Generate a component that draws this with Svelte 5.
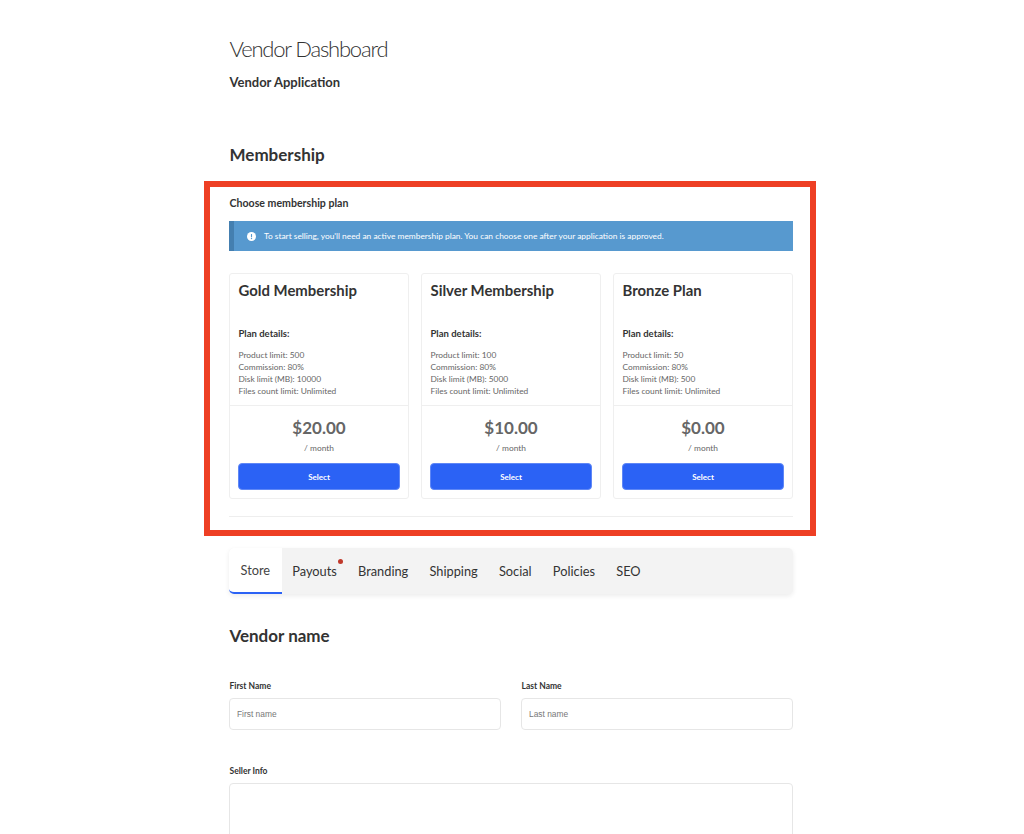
<script>
  const plans = [
    { name: 'Gold Membership', products: 500, disk: 10000, price: '$20.00' },
    { name: 'Silver Membership', products: 100, disk: 5000, price: '$10.00' },
    { name: 'Bronze Plan', products: 50, disk: 500, price: '$0.00' }
  ];
  const tabs = ['Store', 'Payouts', 'Branding', 'Shipping', 'Social', 'Policies', 'SEO'];
</script>

<main class="page">
  <h1>Vendor Dashboard</h1>
  <h2 class="sub">Vendor Application</h2>
  <h3 class="section">Membership</h3>

  <section class="highlight">
    <h4>Choose membership plan</h4>
    <div class="alert">
      <svg viewBox="0 0 16 16" width="9" height="9" aria-hidden="true">
        <circle cx="8" cy="8" r="8" fill="#fff" />
        <rect x="7" y="3.4" width="2" height="5.8" rx="0.6" fill="#5799cf" />
        <circle cx="8" cy="11.6" r="1.2" fill="#5799cf" />
      </svg>
      <span>To start selling, you'll need an active membership plan. You can choose one after your application is approved.</span>
    </div>

    <div class="plans">
      {#each plans as plan}
        <article class="card">
          <div class="card-top">
            <div class="plan-name">{plan.name}</div>
            <div class="plan-label">Plan details:</div>
            <ul>
              <li>Product limit: {plan.products}</li>
              <li>Commission: 80%</li>
              <li>Disk limit (MB): {plan.disk}</li>
              <li>Files count limit: Unlimited</li>
            </ul>
          </div>
          <div class="card-bottom">
            <div class="price">{plan.price}</div>
            <div class="period">/ month</div>
            <button type="button">Select</button>
          </div>
        </article>
      {/each}
    </div>
    <hr />
  </section>

  <nav class="tabs">
    {#each tabs as tab, i}
      <div class="tab" class:active={i === 0}>
        {tab}
        {#if tab === 'Payouts'}<span class="dot"></span>{/if}
      </div>
    {/each}
  </nav>

  <h3 class="vendor">Vendor name</h3>

  <div class="names">
    <div class="field">
      <label for="fn">First Name</label>
      <input id="fn" placeholder="First name" />
    </div>
    <div class="field">
      <label for="ln">Last Name</label>
      <input id="ln" placeholder="Last name" />
    </div>
  </div>

  <div class="field info">
    <label for="si">Seller Info</label>
    <textarea id="si"></textarea>
  </div>
</main>

<style>
  :global(body) {
    margin: 0;
    background: #fff;
    font-family: Lato, "Open Sans", sans-serif;
    color: #333;
    overflow: hidden;
  }
  .page {
    box-sizing: border-box;
    width: 564px;
    height: 834px;
    margin-left: 229px;
    -webkit-font-smoothing: antialiased;
  }
  h1 {
    margin: 0;
    padding: 35px 0 0 0.5px;
    font-size: 22px;
    line-height: 28px;
    font-weight: 300;
    letter-spacing: -1.2px;
    color: #333;
  }
  .sub {
    margin: 10px 0 0;
    padding-left: 0.5px;
    font-size: 13px;
    line-height: 18px;
    font-weight: 700;
  }
  .section {
    margin: 52px 0 0;
    padding-left: 0.5px;
    font-size: 17px;
    line-height: 24px;
    font-weight: 700;
  }
  .highlight {
    box-sizing: border-box;
    margin: 14px -23px 0 -25px;
    height: 355px;
    border: 6px solid #ee3f24;
    padding: 0 17px 0 19px;
  }
  h4 {
    margin: 0;
    padding: 9px 0 0 0.5px;
    font-size: 10.6px;
    line-height: 14px;
    font-weight: 700;
  }
  .alert {
    box-sizing: border-box;
    margin-top: 11px;
    height: 30px;
    background: #5799cf;
    border-left: 5px solid #447fb0;
    padding-left: 13px;
    display: flex;
    align-items: center;
    gap: 8px;
    color: #fff;
    font-size: 8.4px;
  }
  .plans {
    margin-top: 22px;
    display: grid;
    grid-template-columns: repeat(3, 1fr);
    gap: 12px;
  }
  .card {
    box-sizing: border-box;
    height: 226px;
    border: 1px solid #efefef;
    border-radius: 3px;
    display: flex;
    flex-direction: column;
  }
  .card-top {
    box-sizing: border-box;
    height: 132px;
    padding: 6px 8px 0 8.5px;
    border-bottom: 1px solid #efefef;
  }
  .plan-name {
    font-size: 14.9px;
    line-height: 20px;
    font-weight: 700;
  }
  .plan-label {
    margin-top: 27.5px;
    font-size: 9.5px;
    line-height: 12px;
    font-weight: 700;
  }
  ul {
    list-style: none;
    margin: 10.5px 0 0;
    padding: 0;
    font-size: 8.4px;
    line-height: 11.9px;
    color: #666;
  }
  .card-bottom {
    padding: 0 8px;
    text-align: center;
  }
  .price {
    margin-top: 10px;
    font-size: 17px;
    line-height: 24px;
    font-weight: 700;
    color: #666;
  }
  .period {
    margin-top: 2px;
    font-size: 8.4px;
    line-height: 12px;
    color: #666;
  }
  button {
    display: block;
    width: 100%;
    height: 27px;
    margin-top: 9px;
    border: 1px solid #5f87f6;
    border-radius: 4px;
    background: #2b62f5;
    color: #fff;
    font-family: inherit;
    font-size: 8px;
    font-weight: 700;
  }
  hr {
    margin: 17px 0 0;
    border: 0;
    border-top: 1px solid #eee;
  }
  .tabs {
    margin-top: 12px;
    height: 46px;
    background: #f3f3f3;
    border-radius: 5px;
    box-shadow: 0 2px 5px rgba(0, 0, 0, 0.08);
    display: flex;
    font-size: 12.8px;
    color: #333;
  }
  .tab {
    position: relative;
    padding: 0 10.6px;
    display: flex;
    align-items: center;
  }
  .tab.active {
    background: #fff;
    border-bottom: 2px solid #2b62f5;
    border-radius: 5px 0 0 5px;
    box-sizing: border-box;
    color: #444;
    padding: 0 11.5px;
  }
  .dot {
    position: absolute;
    top: 10.5px;
    right: 4px;
    width: 5px;
    height: 5px;
    border-radius: 50%;
    background: #c0392b;
  }
  .vendor {
    margin: 30px 0 0;
    padding-left: 0.5px;
    font-size: 17px;
    line-height: 24px;
    font-weight: 700;
  }
  .names {
    margin-top: 32px;
    display: grid;
    grid-template-columns: 271.5px 272px;
    gap: 20.5px;
  }
  .field {
    display: flex;
    flex-direction: column;
  }
  label {
    padding-left: 0.5px;
    font-size: 8.5px;
    line-height: 12px;
    font-weight: 700;
    color: #333;
    margin-bottom: 6px;
  }
  input {
    box-sizing: border-box;
    width: 100%;
    height: 32px;
    border: 1px solid #e6e6e6;
    border-radius: 4px;
    padding: 0 7px;
    background: #fff;
    font-family: "Liberation Sans", Arial, sans-serif;
    font-size: 8.4px;
    outline: none;
  }
  input::placeholder {
    color: #777;
    opacity: 1;
  }
  .info {
    margin-top: 35px;
    height: 69px;
    overflow: hidden;
  }
  textarea {
    box-sizing: border-box;
    flex: none;
    width: 100%;
    height: 120px;
    border: 1px solid #e6e6e6;
    border-radius: 4px;
    resize: none;
    outline: none;
  }
</style>
